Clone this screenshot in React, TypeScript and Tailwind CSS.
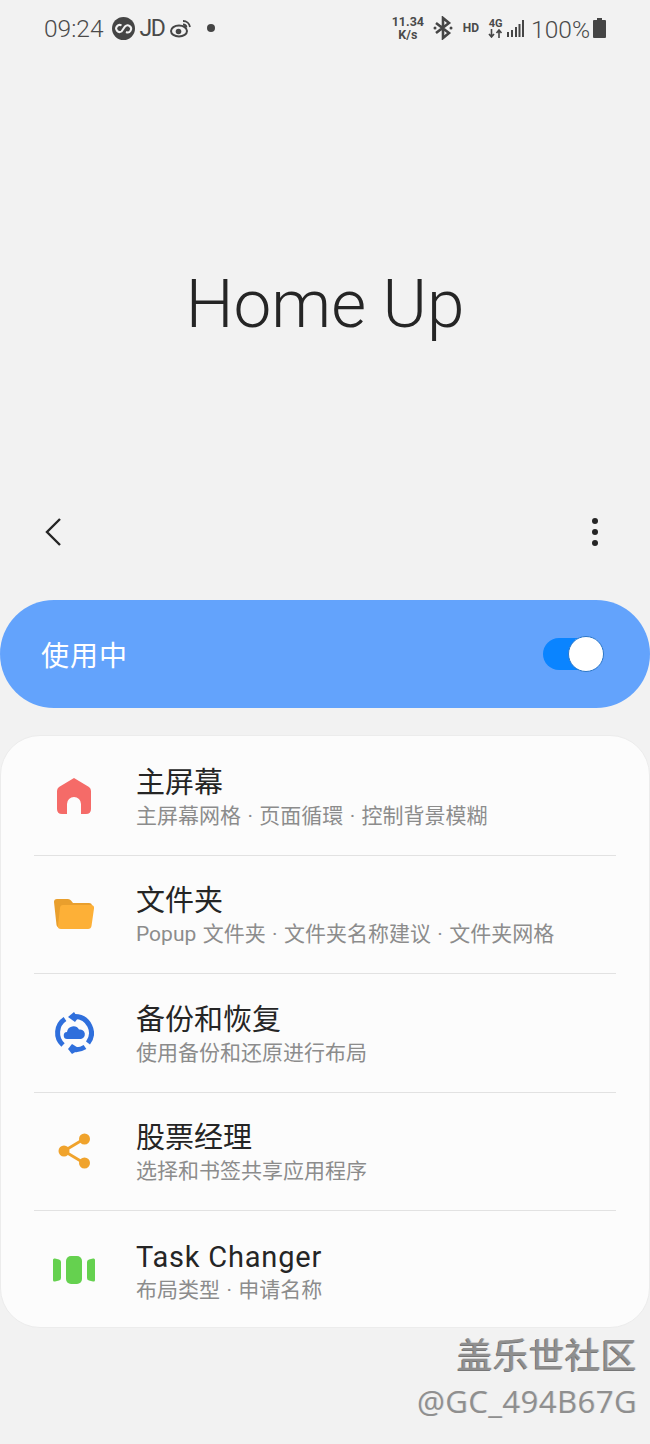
import React from "react";

const rows = [
  { t: "主屏幕", s: "主屏幕网格 · 页面循環 · 控制背景模糊", icon: <HomeIcon /> },
  { t: "文件夹", s: "Popup 文件夹 · 文件夹名称建议 · 文件夹网格", icon: <FolderIcon /> },
  { t: "备份和恢复", s: "使用备份和还原进行布局", icon: <BackupIcon /> },
  { t: "股票经理", s: "选择和书签共享应用程序", icon: <ShareIcon /> },
  { t: "Task Changer", s: "布局类型 · 申请名称", icon: <TaskIcon /> },
];

function HomeIcon() {
  return (
    <svg width="36" height="38" viewBox="0 0 36 38">
      <path fillRule="evenodd" d="M18 1 L33 10 Q35 11.5 35 14 V32 Q35 37 30 37 H25 V27 A7 7 0 0 0 11 27 V37 H6 Q1 37 1 32 V14 Q1 11.500 3 10 Z" fill="#f56b68" />
    </svg>
  );
}
function FolderIcon() {
  return (
    <svg width="42" height="32" viewBox="0 0 42 32">
      <path d="M1 4 Q1 1 4 1 H15 Q17 1 18 2.5 L20 5 H36 Q39 5 39 8 V14 L8 30 Q4 30 3.5 27 Z" fill="#e99f2d" />
      <path d="M10 7 H38 Q41.5 7 41 10.5 L38.500 28 Q38 31 35 31 H8 Q4.500 31 5 28 L7 10 Q7.300 7 10 7 Z" fill="#fdb037" />
    </svg>
  );
}
function BackupIcon() {
  return (
    <svg width="40" height="42" viewBox="0 0 40 42">
      <g fill="none" stroke="#2f6fdc" strokeWidth="5">
        <path d="M9 33 A16.500 16.500 0 0 1 11 7" />
        <path d="M21 4.500 A16.500 16.500 0 0 1 34 31" />
        <path d="M31 35 A16.500 16.500 0 0 1 20 37.500" />
      </g>
      <path d="M20 0 L24 6 L21 10 L14 5 Z" fill="#2f6fdc" />
      <path d="M18 32 L26 37 L18 42 L14 37 Z" fill="#2f6fdc" />
      <path d="M13.500 27 A3.500 3.500 0 0 1 13 20 A6.500 6.500 0 0 1 25 17.500 A4.800 4.800 0 0 1 27 27 Z" fill="#2f6fdc" />
    </svg>
  );
}
function ShareIcon() {
  return (
    <svg width="33" height="36" viewBox="0 0 33 36">
      <path d="M6 18 L26 6 M6 18 L26 30" stroke="#f0a32c" strokeWidth="2.800" fill="none" />
      <circle cx="6" cy="18" r="5.500" fill="#f0a32c" />
      <circle cx="26.500" cy="6" r="5.500" fill="#f0a32c" />
      <circle cx="26.500" cy="30" r="5.500" fill="#f0a32c" />
    </svg>
  );
}
function TaskIcon() {
  return (
    <svg width="44" height="28" viewBox="0 0 44 28">
      <path d="M1 4 Q1 2 3 2.500 L7 3.500 Q9 4 9 6 V22 Q9 24 7 24.500 L3 25.500 Q1 26 1 24 Z" fill="#65d14f" />
      <rect x="14" y="0" width="16" height="28" rx="5" fill="#65d14f" />
      <path d="M43 4 Q43 2 41 2.500 L37 3.500 Q35 4 35 6 V22 Q35 24 37 24.500 L41 25.500 Q43 26 43 24 Z" fill="#65d14f" />
    </svg>
  );
}

export default function App() {
  return (
    <div className="w-[650px] h-[1444px] overflow-hidden bg-[#f2f2f2] relative font-['Roboto','Noto_Sans_CJK_SC',sans-serif] text-[#252525]">
      {/* status bar */}
      <div className="h-[56px] pl-[44px] pr-[44px] flex items-center justify-between text-[#4a4a4a]">
        <div className="flex items-center">
          <span className="text-[24.500px] font-light leading-[30px] pt-[1px]">09:24</span>
          <svg width="23" height="23" viewBox="0 0 23 23" className="ml-[8px]">
            <circle cx="11.500" cy="11.500" r="11.500" fill="#454545" />
            <path d="M9.500 8.500 A3.500 3.500 0 1 0 9.500 14.500 L13 9.500 A3.500 3.500 0 1 1 14 15" stroke="#f2f2f2" strokeWidth="2" fill="none" />
          </svg>
          <span className="ml-[5px] text-[23px] leading-[30px] pt-[1px] tracking-[-1.500px]">JD</span>
          <svg width="22" height="20" viewBox="0 0 22 20" className="ml-[6px]">
            <ellipse cx="9" cy="13" rx="8" ry="5.500" fill="none" stroke="#454545" strokeWidth="2" />
            <circle cx="8.500" cy="13.500" r="2.800" fill="#454545" />
            <path d="M13 3 A7 7 0 0 1 20 9 M13 6.500 A3.500 3.500 0 0 1 16.500 9.500" stroke="#454545" strokeWidth="1.800" fill="none" />
          </svg>
          <span className="ml-[15px] w-[8px] h-[8px] rounded-full bg-[#454545]" />
        </div>
        <div className="flex items-center">
          <div className="flex flex-col items-center text-[12.500px] font-bold leading-[13px] w-[34px]">
            <span>11.34</span>
            <span>K/s</span>
          </div>
          <svg width="20" height="24" viewBox="0 0 20 24" className="ml-[8px]">
            <path d="M3 7 L16 17 L10 22 V2 L16 7 L3 17" fill="none" stroke="#454545" strokeWidth="2.600" />
            <circle cx="2" cy="12" r="1.500" fill="#454545" />
            <circle cx="18" cy="12" r="1.500" fill="#454545" />
          </svg>
          <span className="ml-[10px] text-[12px] font-bold">HD</span>
          <div className="ml-[9px] flex flex-col items-center w-[15px] text-[11px] font-bold leading-[11px]">
            <span>4G</span>
            <svg width="15" height="9" viewBox="0 0 15 9">
              <path d="M3.500 0 V7 M1 5 L3.500 8 L6 5 M11 9 V2 M8.500 4 L11 1 L13.500 4" stroke="#454545" strokeWidth="1.600" fill="none" />
            </svg>
          </div>
          <svg width="18" height="18" viewBox="0 0 18 18" className="ml-[3px]">
            <path d="M1 13 h2 v5 h-2z M5 11 h2 v7 h-2z M9 8 h2 v10 h-2z M12.500 5 h2 v13 h-2z M16 1 h2 v17 h-2z" fill="#454545" />
          </svg>
          <span className="ml-[7px] text-[24.500px] font-light leading-[30px] pt-[3px]">100%</span>
          <svg width="13" height="20" viewBox="0 0 13 20" className="ml-[3px]">
            <path d="M4 0 H9 V2 H12 Q13 2 13 3 V19 Q13 20 12 20 H1 Q0 20 0 19 V3 Q0 2 1 2 H4 Z" fill="#454545" />
          </svg>
        </div>
      </div>

      {/* title */}
      <div className="h-[434px] flex items-start justify-center">
        <h1 className="mt-[208px] text-[67.500px] font-light leading-[80px] text-[#252525]">Home Up</h1>
      </div>

      {/* action bar */}
      <div className="h-[84px] pl-[44px] pr-[52px] flex items-center justify-between">
        <svg width="20" height="30" viewBox="0 0 20 30">
          <path d="M16 2 L3 15 L16 28" fill="none" stroke="#252525" strokeWidth="2.400" />
        </svg>
        <div className="flex flex-col gap-[5px]">
          <span className="w-[6px] h-[6px] rounded-full bg-[#252525]" />
          <span className="w-[6px] h-[6px] rounded-full bg-[#252525]" />
          <span className="w-[6px] h-[6px] rounded-full bg-[#252525]" />
        </div>
      </div>

      {/* toggle bar */}
      <div className="mt-[26px] h-[108px] rounded-[54px] bg-[#63a3fc] pl-[41px] pr-[47px] flex items-center justify-between">
        <span className="text-[28px] text-white tracking-[1px] font-['Noto_Sans_CJK_SC',sans-serif]">使用中</span>
        <div className="relative w-[60px] h-[32px] rounded-full bg-[#0a84ff]">
          <span className="absolute right-[-1px] top-[-2px] w-[36px] h-[36px] rounded-full bg-white border border-[#2a76c8]" />
        </div>
      </div>

      {/* list */}
      <div className="mt-[27px] h-[593px] rounded-[40px] bg-[#fcfcfc] border border-[#ececec] pt-[1px] pl-[33px] pr-[33px] flex flex-col">
        {rows.map((r, i) => (
          <div key={r.t} className={`h-[118.500px] shrink-0 flex items-center ${i < 4 ? "border-b border-[#e2e2e2]" : ""}`}>
            <div className="w-[80px] flex justify-center mr-[22px]">{r.icon}</div>
            <div className="flex flex-col pt-[4px]">
              <span className={i === 4 ? "text-[29px] leading-[36px] text-[#252525] tracking-[0.800px]" : "text-[29px] leading-[36px] text-[#252525]"}>{r.t}</span>
              <span className="text-[21px] leading-[30px] text-[#8c8c8c] [word-spacing:1.200px]">{r.s}</span>
            </div>
          </div>
        ))}
      </div>

      {/* watermark */}
      <div className="absolute right-[13px] top-[1333px] flex flex-col items-end text-[#8f8f8f]">
        <span className="text-[35.500px] leading-[40px] tracking-[0.500px] font-['Noto_Sans_CJK_SC',sans-serif] [text-shadow:-1px_1px_0_#777777,1px_0_0_#dcdcdc]">盖乐世社区</span>
        <span className="mt-[6px] text-[31px] leading-[44px] font-['Open_Sans',sans-serif] tracking-[0.500px] [text-shadow:1px_0_0_#dcdcdc]">@GC_494B67G</span>
      </div>
    </div>
  );
}
